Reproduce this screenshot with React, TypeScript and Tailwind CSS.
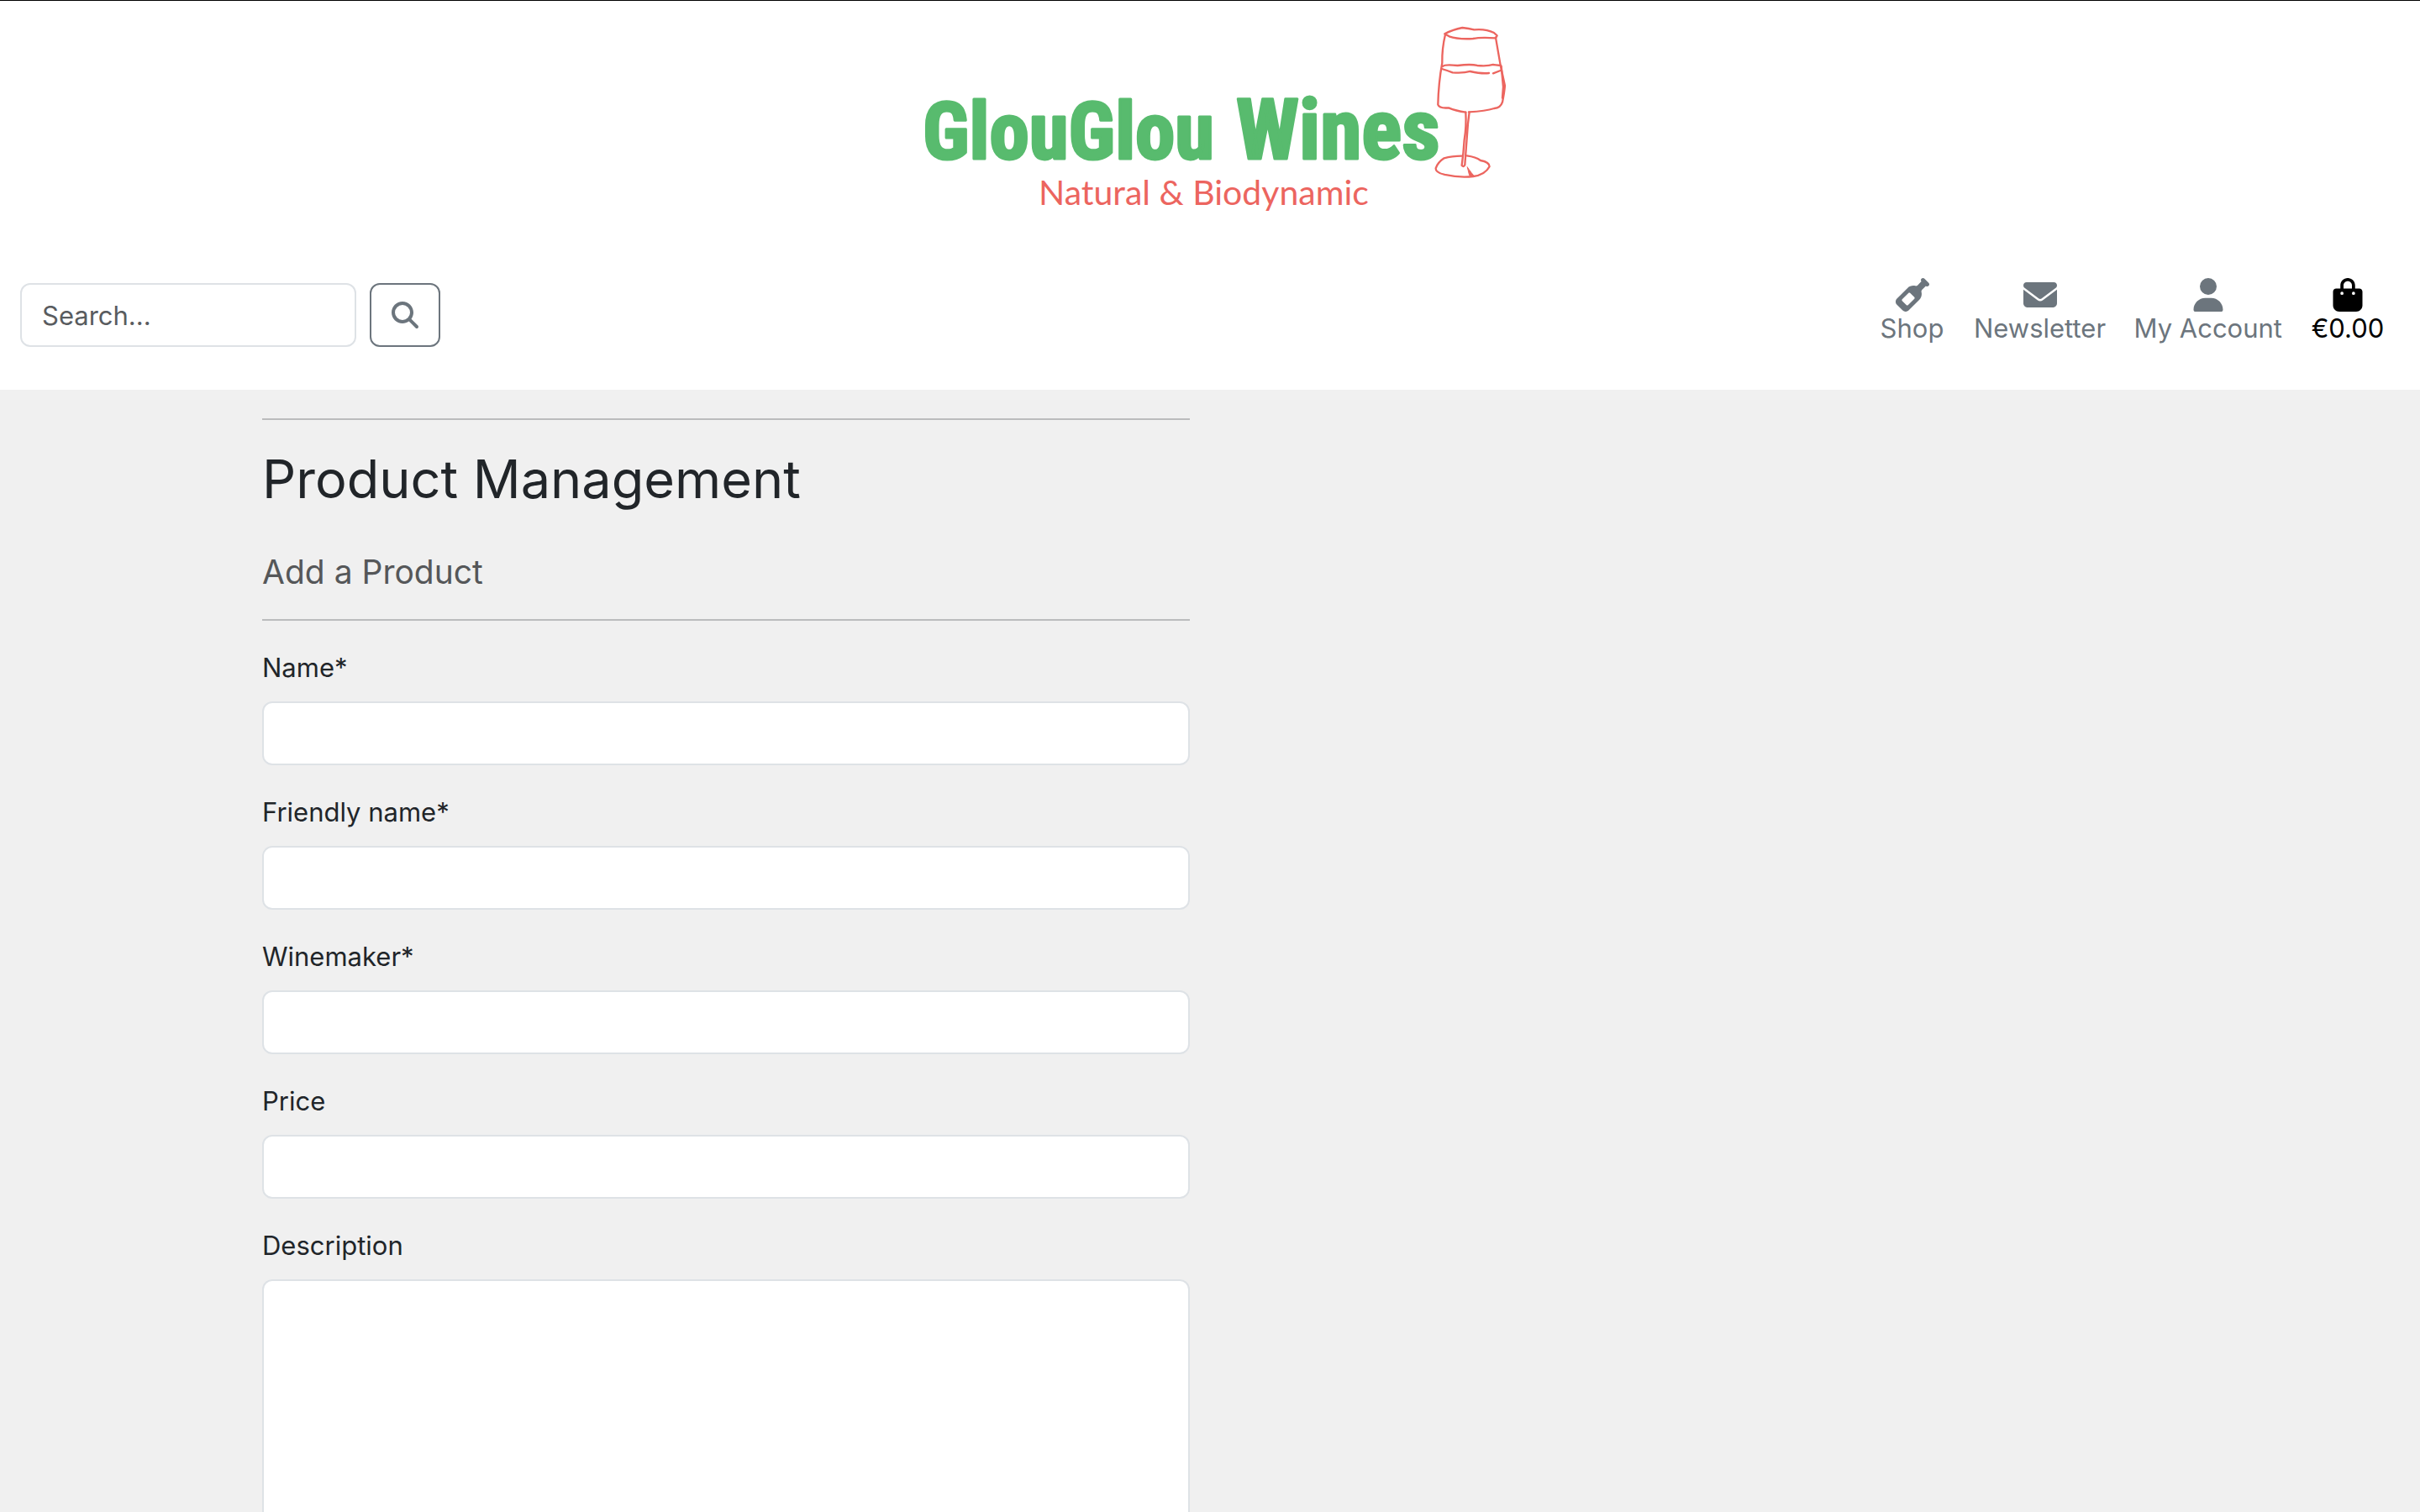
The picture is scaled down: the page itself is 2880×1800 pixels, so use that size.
import React from "react";
import {
  FaBagShopping,
  FaEnvelope,
  FaMagnifyingGlass,
  FaUser,
  FaWineBottle,
} from "react-icons/fa6";

const navItems = [
  { label: "Shop", Icon: FaWineBottle, tone: "text-[#6c757d]", width: "min-w-20" },
  { label: "Newsletter", Icon: FaEnvelope, tone: "text-[#6c757d]", width: "min-w-40" },
  { label: "My Account", Icon: FaUser, tone: "text-[#6c757d]", width: "min-w-44" },
  { label: "€0.00", Icon: FaBagShopping, tone: "text-black", width: "min-w-23" },
];

const textFields = [
  { id: "name", label: "Name*" },
  { id: "friendly-name", label: "Friendly name*" },
  { id: "winemaker", label: "Winemaker*" },
  { id: "price", label: "Price" },
];

const controlClass =
  "block w-full rounded-xl border-2 border-[#dee2e6] bg-white px-6 outline-none focus:border-[#86b7fe]";

function Logo() {
  return (
    <svg viewBox="0 0 720 256" className="h-64 w-[720px]" role="img" aria-label="GlouGlou Wines, Natural & Biodynamic">
      <g fill="#58bb6e" stroke="#58bb6e" strokeWidth="3" strokeLinejoin="round" fontFamily="'Roboto Condensed', Roboto, sans-serif" fontWeight="700">
        <text x="18" y="188" fontSize="95">GlouGlou</text>
        <text x="391" y="188" fontSize="100">Wines</text>
      </g>
      <text x="156" y="243" fill="#ec655f" fontSize="41" fontFamily="Lato, sans-serif">
        Natural &amp; Biodynamic
      </text>
      <g transform="translate(360 -1) scale(0.3333)" fill="none" stroke="#ec655f" strokeWidth="7" strokeLinecap="round" strokeLinejoin="round">
        <path d="M838 121 Q868 105 901 99 Q924 102 943 106 Q985 102 1014 117 L1025 127 L1020 136 Q966 132 939 138 Q884 141 854 130 Z" />
        <path d="M840 124 Q828 174 829 225 Q816 295 814 374 Q819 388 852 385 Q878 396 913 401" />
        <path d="M1020 134 L1037 232 L1053 306 Q1051 331 1044 365 Q1037 386 1015 387 Q984 397 924 400" />
        <path d="M1040 236 L1047 310 L1044 350" />
        <path d="M831 237 Q838 229 884 234 Q932 228 954 234 Q991 237 1011 231 L1038 234" />
        <path d="M828 246 Q851 253 866 259 Q904 262 929 255 Q970 264 996 261 M1011 262 L1037 252" />
        <path d="M913 401 Q916 451 908 500 Q905 549 899 591 Q906 598 910 589 L921 442 L926 401" />
        <path d="M899 557 Q864 557 836 565 Q813 580 806 601 Q805 616 838 624 Q893 636 940 630 Q982 625 998 595 Q998 579 966 573 Q949 560 917 556" />
        <path d="M919 597 L926 626 L945 630 Q935 621 919 597" fill="#ec655f" strokeWidth="3" />
      </g>
    </svg>
  );
}

function SearchForm() {
  return (
    <form className="flex gap-4" role="search" onSubmit={(event) => event.preventDefault()}>
      <input
        type="search"
        aria-label="Search"
        placeholder="Search..."
        className="h-[76px] w-100 rounded-xl border-2 border-[#dee2e6] bg-white px-6 outline-none placeholder:text-[#595c5f] focus:border-[#86b7fe]"
      />
      <button
        type="submit"
        aria-label="Submit search"
        className="flex h-[76px] w-21 items-center justify-center rounded-xl border-2 border-[#6c757d] text-[#6c757d]"
      >
        <FaMagnifyingGlass className="size-8" />
      </button>
    </form>
  );
}

export default function App() {
  return (
    <div className="min-h-screen bg-[#f0f0f0] font-['Inter',sans-serif] text-[31px] leading-12 text-[#212529]">
      <header className="border-t border-black bg-white pb-[45px]">
        <a href="#home" className="flex justify-center">
          <Logo />
        </a>
        <div className="flex items-center justify-between px-6 pt-[74px]">
          <SearchForm />
          <nav aria-label="Main" className="mr-4 mb-2 flex gap-8">
            {navItems.map(({ label, Icon, tone, width }) => (
              <a key={label} href="#menu" className={`flex flex-col items-center leading-10 ${tone} ${width}`}>
                <Icon className="size-10" />
                {label}
              </a>
            ))}
          </nav>
        </div>
      </header>

      <main className="mx-auto max-w-[2256px]">
        <div className="w-1/2 pt-[34px] pr-6">
          <hr className="mb-8 border-t-2 border-[#bbbcbd]" />
          <h1 className="mb-12 text-[63px] leading-[77px]">Product Management</h1>
          <h2 className="text-[39px] leading-12 text-[#555759]">Add a Product</h2>
          <hr className="my-8 border-t-2 border-[#bbbcbd]" />
          <form onSubmit={(event) => event.preventDefault()}>
            {textFields.map(({ id, label }) => (
              <div key={id} className="mb-8">
                <label htmlFor={id} className="mb-4 block">
                  {label}
                </label>
                <input id={id} type="text" className={`h-[76px] ${controlClass}`} />
              </div>
            ))}
            <label htmlFor="description" className="mb-4 block">
              Description
            </label>
            <textarea id="description" rows={10} className={`py-3 ${controlClass}`} />
          </form>
        </div>
      </main>
    </div>
  );
}
